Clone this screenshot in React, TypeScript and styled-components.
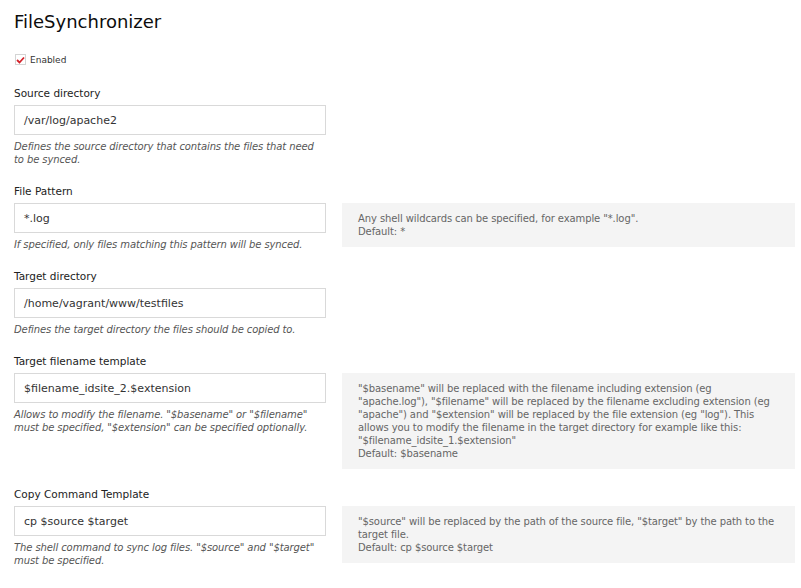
import React from 'react';
import styled, { createGlobalStyle } from 'styled-components';

const GlobalStyle = createGlobalStyle`
  body {
    margin: 0;
    background: #fff;
    font-family: Verdana, 'DejaVu Sans', sans-serif;
    color: #333;
  }
`;

const Page = styled.div`
  padding: 10px 6px 0 14px;
`;

const Title = styled.h2`
  margin: 0;
  font-size: 18px;
  font-weight: normal;
  line-height: 24px;
  color: #0d0d0d;
`;

const CheckRow = styled.label`
  display: flex;
  align-items: center;
  gap: 4px;
  margin: 20px 0 0 1px;
  font-size: 9px;
  color: #333;
`;

const CheckBox = styled.span`
  display: inline-flex;
  align-items: center;
  justify-content: center;
  width: 9px;
  height: 9px;
  border: 1px solid #d4d4d4;
  background: #fff;
`;

const Field = styled.div`
  margin-top: 17px;

  &:first-of-type {
    margin-top: 20px;
  }
`;

const Label = styled.div`
  font-size: 10.5px;
  line-height: 16px;
  color: #222;
  margin-bottom: 4px;
`;

const Row = styled.div`
  display: flex;
  align-items: flex-start;
  gap: 16px;
`;

const Left = styled.div`
  width: 312px;
  flex: none;
`;

const Input = styled.div`
  box-sizing: border-box;
  height: 30px;
  border: 1px solid #d9d9d9;
  padding: 0 9px;
  display: flex;
  align-items: center;
  font-size: 11px;
  color: #333;
`;

const Help = styled.div`
  margin-top: 5px;
  font-size: 10px;
  line-height: 13px;
  letter-spacing: -0.1px;
  font-style: italic;
  color: #555;
`;

const InlineHelp = styled.div<{ $offset?: number }>`
  flex: 1;
  margin-top: ${(p) => p.$offset ?? 0}px;
  background: #f4f4f4;
  padding: 9px 16px 9px 16px;
  font-size: 10px;
  line-height: 13px;
  letter-spacing: -0.1px;
  color: #666;
`;

interface FieldProps {
  label: string;
  value: string;
  help: string;
  inlineHelp?: React.ReactNode;
  offset?: number;
}

const SettingField: React.FC<FieldProps> = ({ label, value, help, inlineHelp, offset }) => (
  <Field>
    <Label>{label}</Label>
    <Row>
      <Left>
        <Input>{value}</Input>
        <Help>{help}</Help>
      </Left>
      {inlineHelp && <InlineHelp $offset={offset}>{inlineHelp}</InlineHelp>}
    </Row>
  </Field>
);

const App: React.FC = () => (
  <Page>
    <GlobalStyle />
    <Title>FileSynchronizer</Title>
    <CheckRow>
      <CheckBox>
        <svg width="9" height="8" viewBox="0 0 9 8">
          <path d="M1 4 L3.5 6.5 L8 1.5" stroke="#d4222a" strokeWidth="1.8" fill="none" />
        </svg>
      </CheckBox>
      Enabled
    </CheckRow>
    <SettingField
      label="Source directory"
      value="/var/log/apache2"
      help="Defines the source directory that contains the files that need to be synced."
    />
    <SettingField
      label="File Pattern"
      value="*.log"
      help="If specified, only files matching this pattern will be synced."
      inlineHelp={
        <>
          Any shell wildcards can be specified, for example "*.log".
          <br />
          Default: *
        </>
      }
    />
    <SettingField
      label="Target directory"
      value="/home/vagrant/www/testfiles"
      help="Defines the target directory the files should be copied to."
    />
    <SettingField
      label="Target filename template"
      value="$filename_idsite_2.$extension"
      help={'Allows to modify the filename. "$basename" or "$filename" must be specified, "$extension" can be specified optionally.'}
      inlineHelp={
        <>
          "$basename" will be replaced with the filename including extension (eg "apache.log"),
          "$filename" will be replaced by the filename excluding extension (eg "apache") and
          "$extension" will be replaced by the file extension (eg "log"). This allows you to modify
          the filename in the target directory for example like this: "$filename_idsite_1.$extension"
          <br />
          Default: $basename
        </>
      }
    />
    <SettingField
      label="Copy Command Template"
      value="cp $source $target"
      help={'The shell command to sync log files. "$source" and "$target" must be specified.'}
      inlineHelp={
        <>
          "$source" will be replaced by the path of the source file, "$target" by the path to the
          target file.
          <br />
          Default: cp $source $target
        </>
      }
    />
  </Page>
);

export default App;
